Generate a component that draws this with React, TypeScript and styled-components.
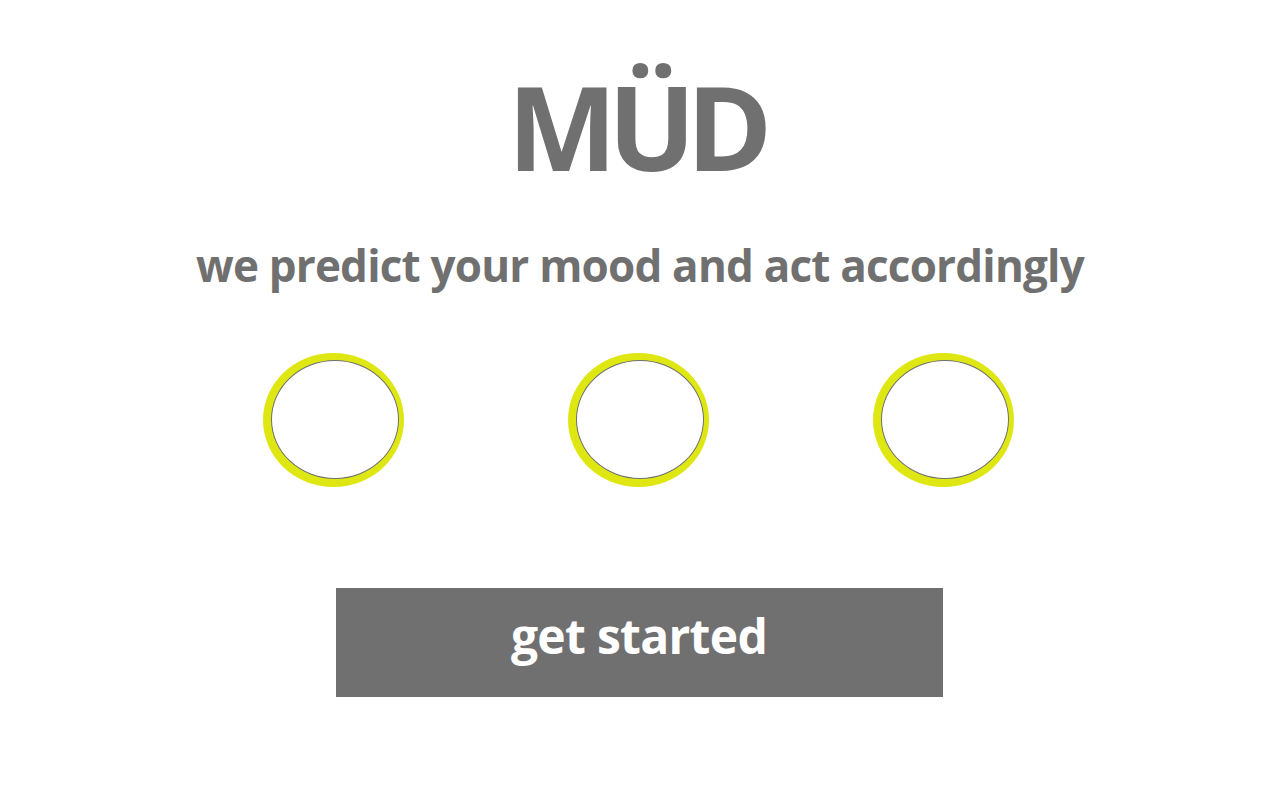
import styled, { createGlobalStyle } from 'styled-components'

const Global = createGlobalStyle`
  html, body { margin: 0; padding: 0; background: #ffffff; }
  body { font-family: "Open Sans", "Noto Sans", sans-serif; }
`

const Page = styled.main`
  width: 1280px;
  height: 800px;
  display: flex;
  flex-direction: column;
  align-items: center;
  padding-top: 62px;
  box-sizing: border-box;
  color: #707070;
`

const Logo = styled.h1`
  margin: 0;
  font-size: 116px;
  line-height: 128px;
  font-weight: 700;
  letter-spacing: -9px;
  padding-right: 9px;
`

const Tagline = styled.h2`
  margin: 53px 0 0;
  font-size: 44px;
  line-height: 44px;
  font-weight: 700;
  letter-spacing: -0.8px;
`

const Moods = styled.div`
  margin: 66px 4px 0 0;
  display: flex;
  gap: 164px;
`

const Ring = styled.div`
  width: 141px;
  height: 134px;
  border-radius: 50%;
  background: #dfe713;
  display: flex;
  padding: 7px 0 0 8px;
  box-sizing: border-box;
`

const Face = styled.div`
  width: 128px;
  height: 119px;
  border-radius: 50%;
  background: #ffffff;
  border: 1px solid #6f6f6f;
  box-sizing: border-box;
`

const Start = styled.button`
  margin: 101px 2px 0 0;
  width: 607px;
  height: 109px;
  border: none;
  background: #707070;
  color: #ffffff;
  font-family: "Open Sans", "Noto Sans", sans-serif;
  font-size: 48px;
  font-weight: 700;
  letter-spacing: -0.7px;
  padding: 0 0 14px;
  cursor: pointer;
`

export default function App() {
  return (
    <>
      <Global />
      <Page>
        <Logo>MÜD</Logo>
        <Tagline>we predict your mood and act accordingly</Tagline>
        <Moods>
          {[0, 1, 2].map(i => (
            <Ring key={i}>
              <Face />
            </Ring>
          ))}
        </Moods>
        <Start>get started</Start>
      </Page>
    </>
  )
}
